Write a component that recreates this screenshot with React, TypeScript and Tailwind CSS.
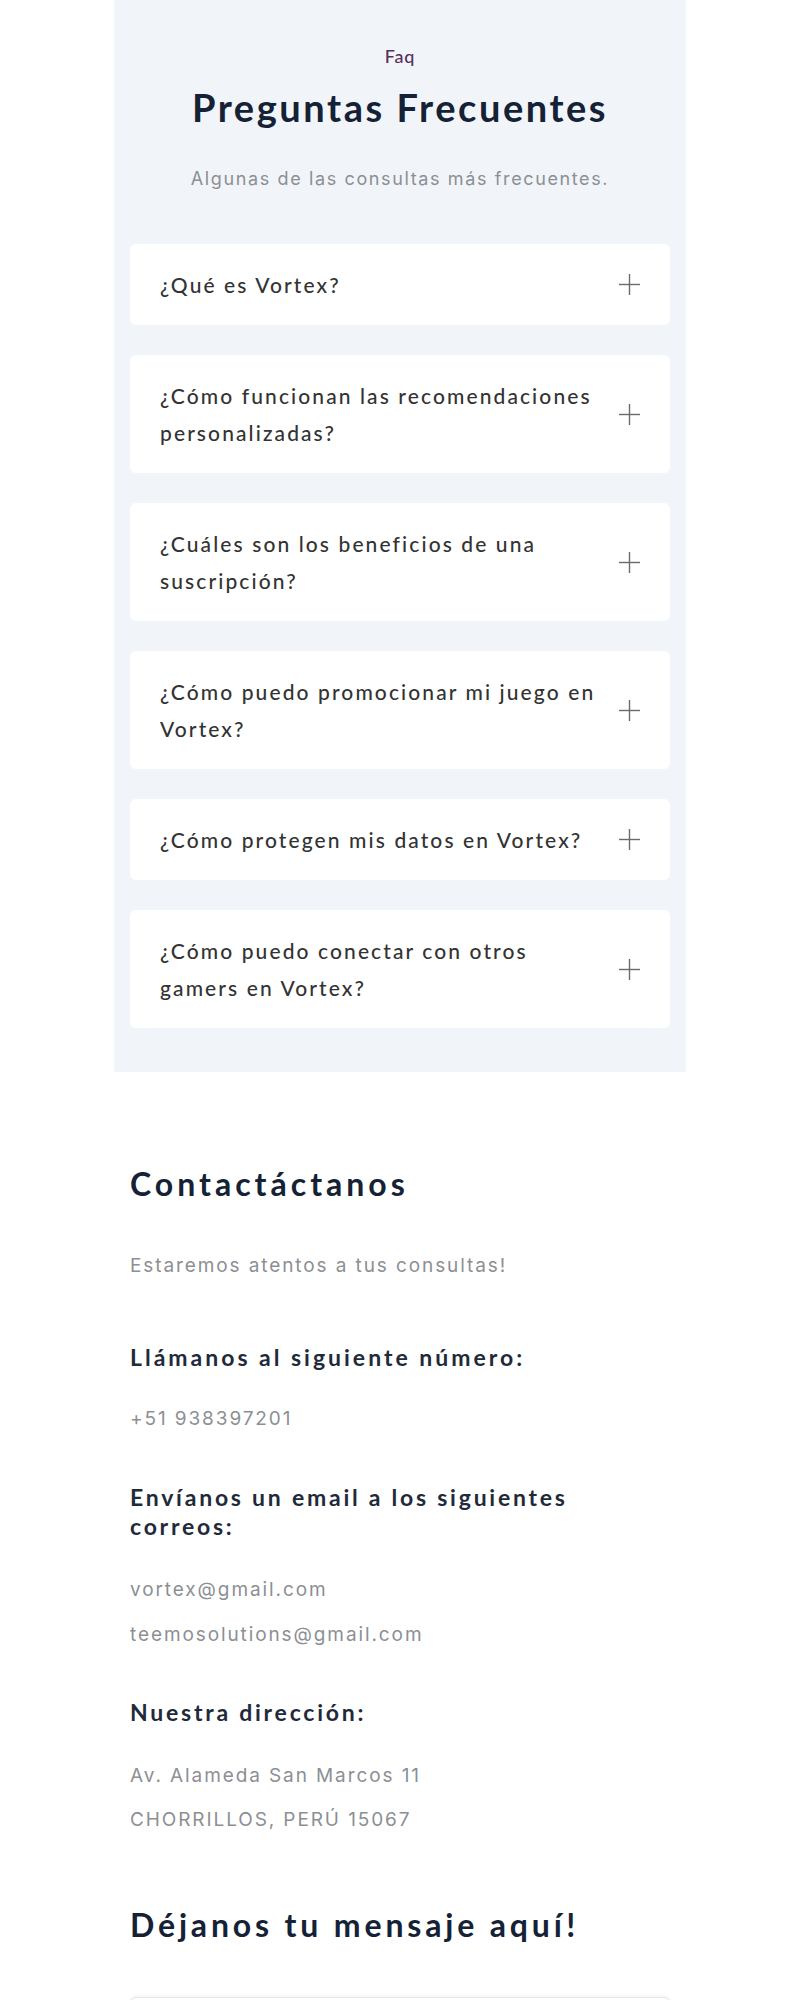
import React from "react";

const faqs: string[][] = [
  ["¿Qué es Vortex?"],
  ["¿Cómo funcionan las recomendaciones", "personalizadas?"],
  ["¿Cuáles son los beneficios de una", "suscripción?"],
  ["¿Cómo puedo promocionar mi juego en", "Vortex?"],
  ["¿Cómo protegen mis datos en Vortex?"],
  ["¿Cómo puedo conectar con otros", "gamers en Vortex?"],
];

function Plus() {
  return (
    <svg width="21" height="21" viewBox="0 0 21 21" className="shrink-0">
      <line x1="10.5" y1="0" x2="10.5" y2="21" stroke="#6b6b6b" strokeWidth="1.4" />
      <line x1="0" y1="10.5" x2="21" y2="10.5" stroke="#6b6b6b" strokeWidth="1.4" />
    </svg>
  );
}

export default function App() {
  return (
    <div className="w-full bg-white">
      <div className="w-[572px] mx-auto">
        <section className="bg-[#f1f5f9] px-4 pt-[44px] pb-[44px]">
          <p className="text-center text-[18px] leading-[24px] tracking-[0.05em] text-[#5a2d5e] font-medium font-['Lato',sans-serif]">
            Faq
          </p>
          <h2 className="mt-[16px] text-center text-[38px] leading-[46px] tracking-[0.067em] font-bold text-[#152235] font-['Lato',sans-serif]">
            Preguntas Frecuentes
          </h2>
          <p className="mt-[35px] text-center text-[18px] leading-[28px] tracking-[0.09em] text-[#8c8f94] font-['Inter',sans-serif]">
            Algunas de las consultas más frecuentes.
          </p>
          <div className="mt-[51px] flex flex-col gap-[30px]">
            {faqs.map((lines, i) => (
              <div
                key={i}
                className="bg-white rounded-[6px] pl-[30px] pr-[30px] py-[22px] flex items-center justify-between gap-3"
              >
                <p className="whitespace-nowrap text-[21px] leading-[37px] text-[#333] font-medium tracking-[0.1em] font-['Lato',sans-serif]">
                  {lines.map((l, j) => (
                    <React.Fragment key={j}>
                      {l}
                      {j < lines.length - 1 && <br />}
                    </React.Fragment>
                  ))}
                </p>
                <Plus />
              </div>
            ))}
          </div>
        </section>

        <section className="px-4 pt-[93px] pb-10">
          <h2 className="text-[32px] leading-[38px] tracking-[0.125em] font-bold text-[#152235] font-['Lato',sans-serif]">
            Contactáctanos
          </h2>
          <p className="mt-[50px] text-[19px] leading-[26px] tracking-[0.1em] text-[#8c8f94] font-['Inter',sans-serif]">
            Estaremos atentos a tus consultas!
          </p>

          <h3 className="mt-[64px] text-[23px] leading-[29px] tracking-[0.13em] font-bold text-[#1f2a3a] font-['Lato',sans-serif]">
            Llámanos al siguiente número:
          </h3>
          <p className="mt-[34px] text-[19px] leading-[26px] tracking-[0.1em] text-[#8c8f94] font-['Inter',sans-serif]">
            +51 938397201
          </p>

          <h3 className="mt-[51px] text-[23px] leading-[29px] tracking-[0.12em] font-bold text-[#1f2a3a] font-['Lato',sans-serif]">
            Envíanos un email a los siguientes
            <br />
            correos:
          </h3>
          <p className="mt-[36px] text-[19px] leading-[26px] tracking-[0.1em] text-[#8c8f94] font-['Inter',sans-serif]">
            vortex@gmail.com
          </p>
          <p className="mt-[19px] text-[19px] leading-[26px] tracking-[0.1em] text-[#8c8f94] font-['Inter',sans-serif]">
            teemosolutions@gmail.com
          </p>

          <h3 className="mt-[50px] text-[23px] leading-[29px] tracking-[0.12em] font-bold text-[#1f2a3a] font-['Lato',sans-serif]">
            Nuestra dirección:
          </h3>
          <p className="mt-[36px] text-[19px] leading-[26px] tracking-[0.1em] text-[#8c8f94] font-['Inter',sans-serif]">
            Av. Alameda San Marcos 11
          </p>
          <p className="mt-[18px] text-[19px] leading-[26px] tracking-[0.1em] text-[#8c8f94] font-['Inter',sans-serif]">
            CHORRILLOS, PERÚ 15067
          </p>

          <h2 className="mt-[73px] text-[32px] leading-[38px] tracking-[0.12em] font-bold text-[#152235] font-['Lato',sans-serif]">
            Déjanos tu mensaje aquí!
          </h2>
          <div className="mt-[53px] h-[56px] rounded-[6px] border border-[#e5e7eb] shadow-[0_0_4px_rgba(0,0,0,0.08)] bg-white" />
        </section>
      </div>
    </div>
  );
}
